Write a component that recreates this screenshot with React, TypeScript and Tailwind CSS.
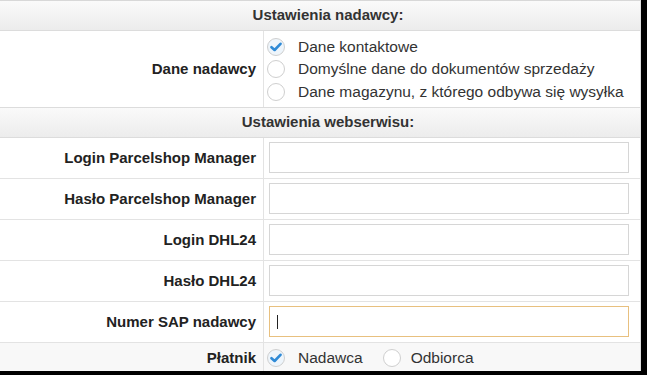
import React from "react";

const Radio = ({ checked }: { checked?: boolean }) => (
  <span
    className={
      "flex h-[18px] w-[18px] shrink-0 items-center justify-center rounded-full border border-[#cfcfcf] " +
      (checked ? "bg-[#eef5fb]" : "bg-white")
    }
  >
    {checked && (
      <svg width="12" height="10" viewBox="0 0 12 10">
        <path d="M1.5 5.2 L4.6 8 L10.5 1.8" fill="none" stroke="#2f8ad6" strokeWidth="2.6" strokeLinecap="round" strokeLinejoin="round" />
      </svg>
    )}
  </span>
);

const Header = ({ text, h }: { text: string; h: string }) => (
  <div
    className={
      "flex items-center justify-center border-b border-[#dcdcdc] bg-gradient-to-b from-[#fafafa] to-[#ececec] pl-[16px] text-[15px] font-bold text-[#333] " +
      h
    }
  >
    {text}
  </div>
);

const InputRow = ({ label, focus }: { label: string; focus?: boolean }) => (
  <div className="flex h-[41px] border-b border-[#e3e3e3]">
    <div className="flex w-[264px] shrink-0 items-center justify-end border-r border-[#e3e3e3] pr-[7px] text-[15px] font-bold text-[#222]">
      {label}
    </div>
    <div className="flex flex-1 items-start pl-[5px] pt-[4px]">
      <div
        className={
          "flex h-[31px] w-[360px] items-center border bg-white pl-[7px] " +
          (focus ? "border-[#e8c07f]" : "border-[#d6d6d6]")
        }
      >
        {focus && <span className="h-[14px] w-[1px] bg-[#222]" />}
      </div>
    </div>
  </div>
);

export default function App() {
  return (
    <div className="h-[375px] w-[647px] bg-black" style={{ fontFamily: '"Liberation Sans", Arial, sans-serif' }}>
      <div className="h-[371px] w-[641px] overflow-hidden border-r border-[#e0e0e0] border-t border-t-[#d8d8d8] bg-white">
        <Header text="Ustawienia nadawcy:" h="h-[30px]" />
        <div className="flex h-[77px] border-b border-[#dcdcdc]">
          <div className="flex w-[264px] shrink-0 items-center justify-end border-r border-[#e3e3e3] pr-[7px] text-[15px] font-bold text-[#222]">
            Dane nadawcy
          </div>
          <div className="flex flex-1 flex-col justify-center gap-[4.5px] pl-[3px] text-[15.5px] text-[#333]">
            <div className="flex h-[18px] items-center gap-[13px]">
              <Radio checked />
              <span>Dane kontaktowe</span>
            </div>
            <div className="flex h-[18px] items-center gap-[13px]">
              <Radio />
              <span>Domyślne dane do dokumentów sprzedaży</span>
            </div>
            <div className="flex h-[18px] items-center gap-[13px]">
              <Radio />
              <span>Dane magazynu, z którego odbywa się wysyłka</span>
            </div>
          </div>
        </div>
        <Header text="Ustawienia webserwisu:" h="h-[30px]" />
        <InputRow label="Login Parcelshop Manager" />
        <InputRow label="Hasło Parcelshop Manager" />
        <InputRow label="Login DHL24" />
        <InputRow label="Hasło DHL24" />
        <InputRow label="Numer SAP nadawcy" focus />
        <div className="flex h-[30px] bg-[#f8f8f8]">
          <div className="flex w-[264px] shrink-0 items-center justify-end border-r border-[#e3e3e3] pr-[7px] text-[15px] font-bold text-[#222]">
            Płatnik
          </div>
          <div className="flex flex-1 items-center pl-[3px] text-[15.5px] text-[#333]">
            <div className="flex items-center gap-[13px]">
              <Radio checked />
              <span>Nadawca</span>
            </div>
            <div className="ml-[20px] flex items-center gap-[10px]">
              <Radio />
              <span>Odbiorca</span>
            </div>
          </div>
        </div>
      </div>
    </div>
  );
}
